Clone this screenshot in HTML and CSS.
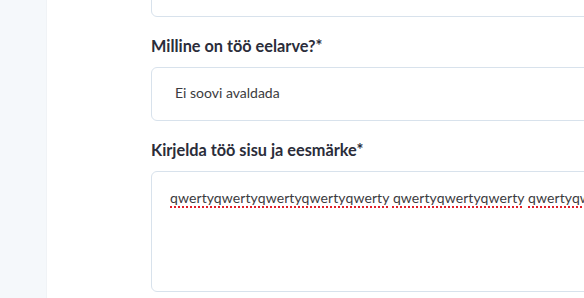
FILE: index.html
```html
<!DOCTYPE html>
<html lang="et">
<head>
  <meta charset="UTF-8">
  <title>Töö kirjeldus</title>
  <link rel="stylesheet" href="styles.css">
</head>
<body>
  <aside class="sidebar"></aside>

  <main class="content">
    <form class="job-form">
      <div class="field first">
        <div class="box"></div>
      </div>

      <div class="field">
        <label for="budget">Milline on töö eelarve?*</label>
        <div class="box select" id="budget">Ei soovi avaldada</div>
      </div>

      <div class="field">
        <label for="description">Kirjelda töö sisu ja eesmärke*</label>
        <div class="box textarea" id="description">
          <span class="typo">qwertyqwertyqwertyqwertyqwerty</span> <span class="typo">qwertyqwertyqwerty</span> <span class="typo">qwertyqw</span>
        </div>
      </div>
    </form>
  </main>
</body>
</html>
```

FILE: styles.css
```css
body {
  margin: 0;
  padding: 0;
  display: flex;
  height: 298px;
  overflow: hidden;
  font-family: 'Lato', sans-serif;
  background-color: #ffffff;
}

.sidebar {
  width: 46px;
  flex-shrink: 0;
  background-color: #f5f8fb;
  border-right: 1px solid #f0f3f6;
}

.content {
  flex: 1;
  padding-left: 104px;
  overflow: hidden;
}

.job-form {
  display: flex;
  flex-direction: column;
  width: 560px;
  margin-top: -37px;
}

.field {
  display: flex;
  flex-direction: column;
  margin-top: 19px;
}

.field.first {
  margin-top: 0;
}

label {
  font-size: 16.3px;
  line-height: 20px;
  font-weight: 700;
  color: #2b2d3a;
  margin-bottom: 11px;
}

.box {
  border: 1px solid #d8e2ec;
  border-radius: 6px;
  box-sizing: border-box;
  height: 54px;
  font-size: 14px;
  color: #3b3b40;
}

.select {
  display: flex;
  align-items: center;
  padding: 0 0 4px 23px;
}

.textarea {
  height: 121px;
  padding: 16px 18px;
  line-height: 20px;
  white-space: nowrap;
  overflow: hidden;
  letter-spacing: 0.1px;
}

.typo {
  text-decoration: underline dotted #e0202a;
  text-decoration-thickness: 1.5px;
  text-underline-offset: 3px;
}
```
